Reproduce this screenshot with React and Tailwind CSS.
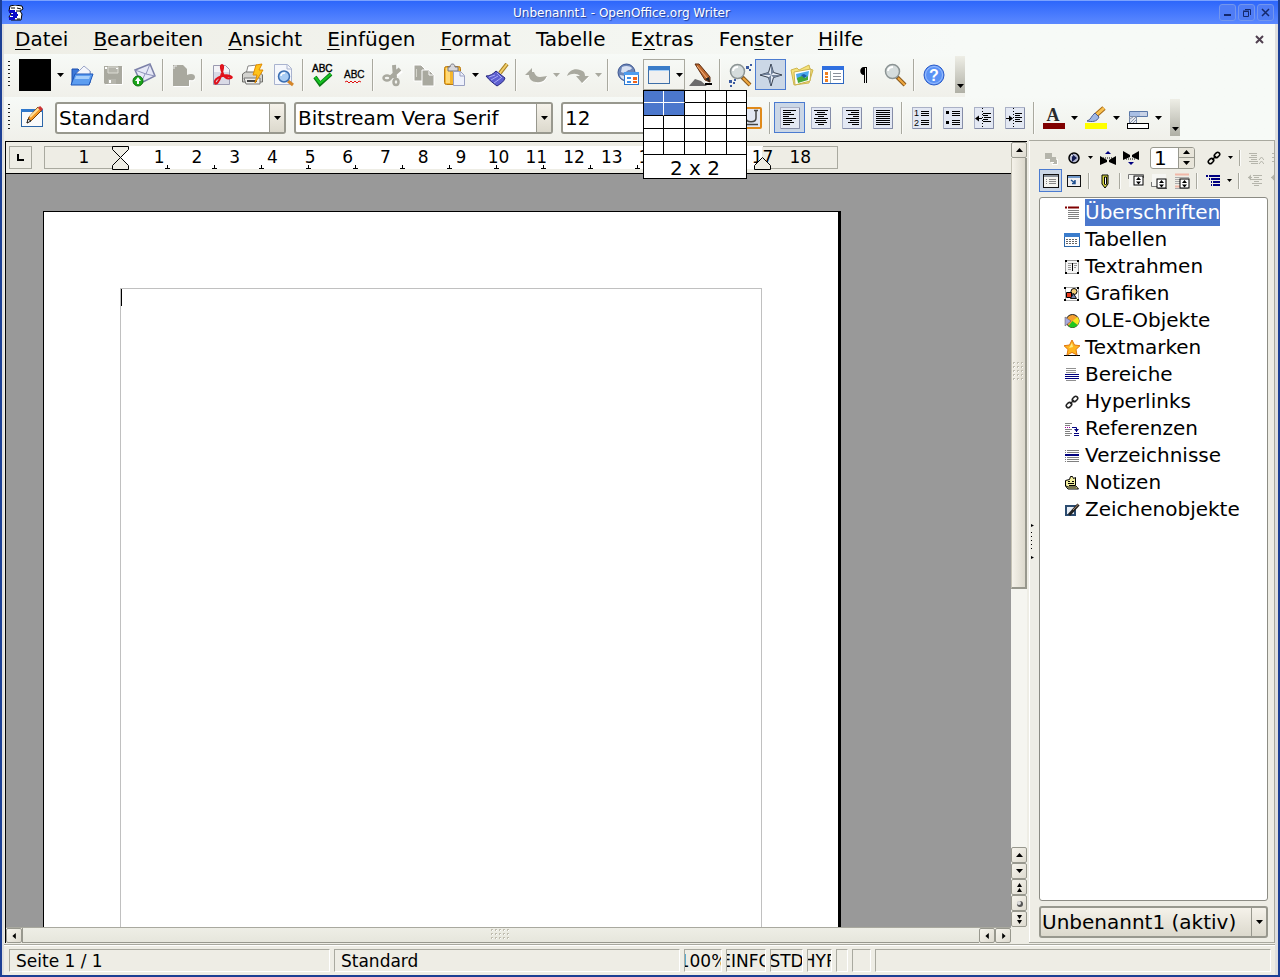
import React, { useState } from 'react';

/* ---------- icons, 24px ---------- */

const Icon = ({ size = 24, children }) => (
  <svg width={size} height={size} viewBox={`0 0 ${size} ${size}`} fill="none" className="shrink-0" aria-hidden="true">
    {children}
  </svg>
);

const OpenIcon = () => (
  <Icon>
    <path d="M2 6h6l2 2h10v12H2z" fill="#3d78d8" stroke="#1c4fae" />
    <path d="M5 12l9-9 6 5v8H5z" fill="#f3f5fb" stroke="#9aa5c8" />
    <path d="M5 11h18l-4 11H1z" fill="#5c9df0" stroke="#1c55b8" />
    <path d="M6 13h14l-1 3H5z" fill="#a5cdfa" />
  </Icon>
);

const SaveIcon = () => (
  <Icon>
    <path d="M3 3h18v18H4l-1-1z" fill="#a9a99f" />
    <path d="M7 4h10v6H7z" fill="#b5b5ac" stroke="#dcdcd4" />
    <path d="M7 16h8v5H7z" fill="#b5b5ac" />
    <path d="M8 17h2v3H8zM15 5h2v1h-2zM4 4h2v2H4z" fill="#fff" />
    <path d="M21.500 4v17.500H5" stroke="#fff" />
  </Icon>
);

const MailIcon = () => (
  <Icon>
    <path d="M3 7l15-6 5 12-14 7z" fill="#e6e8f6" stroke="#7b80a8" strokeWidth="1.500" />
    <path d="M3 7l11 4 4-10M9 20l4-9M23 13l-9-2" stroke="#8f94bb" />
    <circle cx="6" cy="18" r="5" fill="#1aa51a" stroke="#0b720b" />
    <path d="M6 14l3 4H7v3H5v-3H3z" fill="#fff" />
  </Icon>
);

const EditDocIcon = () => (
  <Icon>
    <path d="M2 2h10l4 4v6c4-2 8-1 8 2s-3 4-6 3v6H2z" fill="#a9a99f" />
    <path d="M2.500 23.500h16v-6c4 1 6 0 6-3" stroke="#fff" />
    <path d="M3 6V3h3" stroke="#eee" />
  </Icon>
);

const PdfIcon = () => (
  <Icon>
    <path d="M3.500 2.500h12l4 4v15h-16z" fill="#f3f3f7" stroke="#9a9ab0" />
    <path d="M4 9h15v12H4z" fill="#d9dae6" />
    <path d="M12 2c-2 0-1 5 1 9s5 5 8 4-3-4-9-2-8 5-7 7 4-1 6-7 3-11 1-11z" stroke="#e0101a" strokeWidth="2" />
  </Icon>
);

const PrintIcon = () => (
  <Icon>
    <path d="M7 3l9-1-2 9H5z" fill="#fff" stroke="#888" />
    <path d="M1.500 11l3-2h14l3 3v7h-20z" fill="#d3d3cf" stroke="#6e6e6a" />
    <path d="M3 15h16v6H5z" fill="#efefec" stroke="#777" />
    <path d="M6 18h10" stroke="#444" strokeWidth="2" />
    <path d="M15 2l6-1-3 6h4L14 20l2-8h-4z" fill="#ffc31a" stroke="#e08a00" />
  </Icon>
);

const PreviewIcon = () => (
  <Icon>
    <path d="M2.500 1.500h13l4 4v16h-17z" fill="#f5f7fc" stroke="#a9b3cf" />
    <path d="M15 2v4h4" stroke="#a9b3cf" />
    <path d="M16 18l5 4" stroke="#d5862a" strokeWidth="3" />
    <circle cx="12" cy="13.500" r="5.500" fill="#a9cdf4" stroke="#3a6db0" strokeWidth="1.500" />
    <path d="M9 13c0-2 2-3 4-3" stroke="#fff" strokeWidth="1.500" />
  </Icon>
);

const SpellIcon = () => (
  <Icon>
    <text x="1" y="9" fontSize="10" fontFamily="Liberation Sans, sans-serif" fill="#000" stroke="#000" strokeWidth=".4">ABC</text>
    <path d="M4 14l5 7L20 11" stroke="#0a7a14" strokeWidth="4" />
    <path d="M4 14l5 6L20 11" stroke="#16c422" strokeWidth="2" />
  </Icon>
);

const AutoSpellIcon = () => (
  <Icon>
    <text x="2" y="15" fontSize="10" fontFamily="Liberation Sans, sans-serif" fill="#000" stroke="#000" strokeWidth=".3">ABC</text>
    <path d="M3 19l2-1 2 2 2-2 2 2 2-2 2 2 2-2 2 1" stroke="#e01010" />
  </Icon>
);

const CutIcon = () => (
  <Icon>
    <path d="M14 3l1 13M21 8l-10 8" stroke="#fff" strokeWidth="3" />
    <path d="M13 2l1 13M19 6l-10 9" stroke="#a9a99f" strokeWidth="4" />
    <ellipse cx="6" cy="15" rx="3.500" ry="2.500" stroke="#a9a99f" strokeWidth="2.500" />
    <ellipse cx="15" cy="19" rx="2.500" ry="3" stroke="#a9a99f" strokeWidth="2.500" />
  </Icon>
);

const CopyIcon = () => (
  <Icon>
    <path d="M2 2h7l4 4v12H2z" fill="#a9a99f" stroke="#fff" />
    <path d="M10 7h7l5 5v11H10z" fill="#a9a99f" stroke="#fff" />
    <path d="M17 8v4h4" stroke="#fff" />
    <path d="M4.500 6v8" stroke="#d5d5cc" />
  </Icon>
);

const PasteIcon = () => (
  <Icon>
    <rect x="1.500" y="3.500" width="16" height="18" rx="2" fill="#f5b52c" stroke="#b87a12" />
    <path d="M3 5h4v15H3z" fill="#ffd978" />
    <path d="M5 4h2c0-4 5-4 5 0h3v4H5z" fill="#d7d7dc" stroke="#77777f" />
    <path d="M10.500 8.500h7l4 4v10h-11z" fill="#eef1fb" stroke="#9aa1c2" />
    <path d="M17 9v4h4" stroke="#9aa1c2" />
  </Icon>
);

const BrushIcon = () => (
  <Icon>
    <path d="M22 1l-7 9" stroke="#a88024" strokeWidth="4" />
    <path d="M22 1l-7 9" stroke="#f2cf6a" strokeWidth="2" />
    <path d="M11 8l9 7c-1 4-5 6-8 8C8 20 4 17 1 13c4 0 7-2 10-5z" fill="#5d5fd0" stroke="#26277c" />
    <path d="M4 14l6-2M6 17l7-4M9 20l7-5M12 10l5 5" stroke="#a8aaf5" />
  </Icon>
);

const UndoIcon = () => (
  <Icon>
    <path d="M1 12l7-7v4h2c1 3 3 5 6 5s5-1 7-1c-2 5-6 7-11 6-4 0-7-3-7-7z" fill="#a9a99f" />
    <path d="M23 14c-2 5-6 7-11 6" stroke="#fff" />
  </Icon>
);

const RedoIcon = () => (
  <Icon>
    <path d="M23 13l-7 7-6-7h4c-3-3-8-3-13 0 2-6 8-8 13-6 4 1 5 3 5 6z" fill="#a9a99f" />
    <path d="M23 14l-7 7" stroke="#fff" />
  </Icon>
);

const HyperlinkIcon = () => (
  <Icon>
    <circle cx="10.500" cy="9.500" r="8.500" fill="#6d86b8" stroke="#3c5590" />
    <path d="M6 4c4-2 8-1 10 1-2 3-3 1-5 3s-4 2-6 1zM4 12l5 1v4c-3-1-5-3-5-5z" fill="#d7e0f2" />
    <rect x="8.500" y="9.500" width="14" height="12" fill="#fff" stroke="#2c78d0" />
    <path d="M8 9h15v3H8z" fill="#4f9df0" />
    <path d="M11 14h4v2h-4zM11 18h4v2h-4z" fill="#3f8fe8" />
    <path d="M17 14h4v3h-4zM17 18h4v2h-4z" fill="#f0641a" />
  </Icon>
);

const TableIcon = () => (
  <Icon>
    <rect x="1.500" y="3.500" width="21" height="17" fill="#f0f0f0" stroke="#3c6ea8" />
    <path d="M1 3h22v4H1z" fill="#3a7cc8" />
    <path d="M2 7.500h20" stroke="#a9d0f7" />
  </Icon>
);

const DrawIcon = () => (
  <Icon>
    <path d="M0 23l6-7 6 2 6 5z" fill="#6c6c6c" />
    <path d="M16 21h7" stroke="#000" strokeWidth="2" />
    <path d="M6 1h4l11 13v5l-5-2z" fill="#bf6a30" stroke="#5c2c10" />
    <path d="M8 3l10 12" stroke="#f3b483" />
    <path d="M16 16l4-2 1 5z" fill="#222" />
  </Icon>
);

const Magnifier = () => (
  <>
    <path d="M14 14l8 8" stroke="#8a5a1c" strokeWidth="4" />
    <path d="M15 15l7 7" stroke="#f0a840" strokeWidth="2" />
    <circle cx="9.500" cy="8.500" r="7" fill="#d5dcdc" stroke="#8c9494" strokeWidth="1.500" />
    <path d="M5 8c0-3 3-4 5-4" stroke="#fff" strokeWidth="2" />
  </>
);

const FindIcon = () => (
  <Icon>
    <Magnifier />
    <path d="M18 3h3v3h-3zM22 1h2v2h-2zM21 6h2v2h-2zM1 17h3v3H1zM5 19h2v2H5zM2 22h2v2H2zM6 16h2v2H6z" fill="#3b5aa0" />
  </Icon>
);

const ZoomIcon = () => (
  <Icon>
    <Magnifier />
  </Icon>
);

const NavigatorIcon = () => (
  <Icon>
    <path d="M12 1l2.500 8.500L23 12l-8.500 2.500L12 23l-2.500-8.500L1 12l8.500-2.500z" fill="#e5ecf6" stroke="#333d4c" />
    <path d="M12 1v11l2.500-2.500zM23 12H12l2.500 2.500zM12 23V12l-2.500 2.500zM1 12h11L9.500 9.500z" fill="#72839c" />
  </Icon>
);

const GalleryIcon = () => (
  <Icon>
    <path d="M1 7l6-2 2 2 10-5 1 4 3 1-4 13-15 2z" fill="#f5e27a" stroke="#d0b850" />
    <path d="M4 9l17-3-1 12-15 4z" fill="#fff" stroke="#c9b04c" />
    <path d="M6 11l13-3-1 6-11 3z" fill="#4aa9ee" />
    <path d="M7 15l5-2 3 2 3-2v4L8 20z" fill="#46a838" />
    <path d="M11 12l3-1 3 2-3 2z" fill="#1c5ca8" />
  </Icon>
);

const DataSourceIcon = () => (
  <Icon>
    <rect x="1.500" y="3.500" width="21" height="17" fill="#fff" stroke="#2c66c0" />
    <path d="M1 3h22v4H1z" fill="#2f6fe0" />
    <path d="M4 9h3v3H4zM4 13h3v2H4zM4 16h3v3H4z" fill="#f08020" />
    <path d="M9.500 8v12" stroke="#9aa" />
    <path d="M12 10.500h8M12 13.500h8M12 16.500h8" stroke="#8a8f99" />
  </Icon>
);

const PilcrowIcon = () => (
  <Icon>
    <path d="M15 4h-3c-5 0-5 8 0 8v8h1V5h1v15h1z" fill="#000" />
  </Icon>
);

const HelpIcon = () => (
  <Icon>
    <circle cx="12" cy="12" r="10" fill="#5b92f5" stroke="#2c5cc8" />
    <circle cx="12" cy="12" r="8.500" stroke="#9cc0ff" />
    <text x="12" y="18" textAnchor="middle" fontSize="16" fontWeight="bold" fontFamily="Liberation Sans, sans-serif" fill="#fff">?</text>
  </Icon>
);

const StylesIcon = () => (
  <Icon>
    <rect x="1.500" y="3.500" width="21" height="17" fill="#fafafa" stroke="#2c66a8" />
    <path d="M1 3h22v3H1z" fill="#2f78cc" />
    <path d="M7 17l2-6L18 1l4 3-10 10z" fill="#f39a26" stroke="#7a4208" />
    <path d="M10 11l9-9" stroke="#ffdf9a" strokeWidth="2" />
    <path d="M7 17l1-4 3 2z" fill="#fff" stroke="#222" />
    <path d="M19 1l3 3" stroke="#c33" strokeWidth="3" />
  </Icon>
);

const Sheet = ({ children }) => (
  <Icon>
    <rect x="2.500" y="1.500" width="19" height="21" fill="#e3e8f3" stroke="#aab1c6" />
    <path d="M21.500 2v20.500H3" stroke="#858da8" />
    {children}
  </Icon>
);

const AlignLeftIcon = () => (
  <Sheet>
    <path d="M5 4.500h13M5 6.500h8M5 8.500h11M5 10.500h6M5 12.500h13M5 14.500h9M5 16.500h11M5 18.500h7" stroke="#000" />
  </Sheet>
);

const AlignCenterIcon = () => (
  <Sheet>
    <path d="M5 4.500h14M8 6.500h8M6 8.500h12M9 10.500h6M5 12.500h14M7 14.500h10M6 16.500h12M9 18.500h6" stroke="#000" />
  </Sheet>
);

const AlignRightIcon = () => (
  <Sheet>
    <path d="M6 4.500h13M11 6.500h8M8 8.500h11M13 10.500h6M6 12.500h13M10 14.500h9M8 16.500h11M12 18.500h7" stroke="#000" />
  </Sheet>
);

const JustifyIcon = () => (
  <Sheet>
    <path d="M5 4.500h14M5 6.500h14M5 8.500h14M5 10.500h14M5 12.500h14M5 14.500h14M5 16.500h14M5 18.500h14" stroke="#000" />
  </Sheet>
);

const NumberingIcon = () => (
  <Sheet>
    <path d="M11 5.500h8M11 7.500h8M11 9.500h8M11 14.500h8M11 16.500h8M11 18.500h8" stroke="#000" />
    <text x="4" y="10" fontSize="9" fontFamily="Liberation Sans, sans-serif" fill="#000">1</text>
    <text x="4" y="20" fontSize="9" fontFamily="Liberation Sans, sans-serif" fill="#000">2</text>
  </Sheet>
);

const BulletsIcon = () => (
  <Sheet>
    <path d="M11 5.500h8M11 7.500h8M11 9.500h8M11 14.500h8M11 16.500h8M11 18.500h8" stroke="#000" />
    <path d="M5 5h3v3H5zM5 15h3v3H5z" fill="#000" />
  </Sheet>
);

const OutdentIcon = () => (
  <Sheet>
    <path d="M10.500 2v21" stroke="#000" strokeDasharray="1 2" />
    <path d="M11 7.500h8M11 9.500h5M12 11.500h7M11 13.500h5M11 15.500h8" stroke="#000" />
    <path d="M4 12.500h6" stroke="#000" />
    <path d="M3 12.500l4-3v6z" fill="#000" />
  </Sheet>
);

const IndentIcon = () => (
  <Sheet>
    <path d="M10.500 2v21" stroke="#000" strokeDasharray="1 2" />
    <path d="M12 7.500h7M12 9.500h5M12 11.500h7M12 13.500h5M12 15.500h7" stroke="#000" />
    <path d="M3 12.500h6" stroke="#000" />
    <path d="M10 12.500l-4-3v6z" fill="#000" />
  </Sheet>
);

const FontColorIcon = () => (
  <Icon>
    <text x="11" y="15" textAnchor="middle" fontSize="18" fontWeight="bold" fontFamily="Liberation Serif, serif" fill="#2a2a2a">A</text>
    <path d="M1 17h22v6H1z" fill="#800000" />
  </Icon>
);

const HighlightIcon = () => (
  <Icon>
    <path d="M20 2L11 10" stroke="#a86a14" strokeWidth="5" />
    <path d="M20 2L11 10" stroke="#f8c050" strokeWidth="3" />
    <path d="M11 7l4 4c-2 5-7 5-12 4 4-1 4-5 8-8z" fill="#9fb6e4" stroke="#4a5c94" />
    <path d="M1 17h22v6H1z" fill="#ff0" />
  </Icon>
);

const BackColorIcon = () => (
  <Icon>
    <path d="M3.500 5.500h18v5h-18z" fill="#c9d3e6" stroke="#5a78a8" />
    <path d="M4 6h10v4H4z" fill="#a9bfe4" />
    <path d="M3.500 10.500h7v7h-7z" fill="#e4e7ee" stroke="#7a8ba8" />
    <path d="M4 17l6-6M4 13l3-2M7 17l3-3" stroke="#8a97ad" />
    <rect x="1.500" y="17.500" width="21" height="5" fill="#fff" stroke="#000" />
  </Icon>
);

const BoldIcon = () => (
  <Icon>
    <path d="M8 4h5c5 0 5 7 0 7H8zm0 7h6c5 0 5 8 0 8H8z" stroke="#222" strokeWidth="3" />
  </Icon>
);

const ItalicIcon = () => (
  <Icon>
    <path d="M15 4l-5 15M12 4h6M7 19h6" stroke="#222" strokeWidth="2" />
  </Icon>
);

const UnderlineIcon = () => (
  <Icon>
    <rect x="2" y="2" width="20" height="20" rx="1" fill="#e3e8f3" stroke="#e08a1a" strokeWidth="2" />
    <path d="M7 5v7c0 5 10 5 10 0V5M15 4.500h4M6 18.500h13" stroke="#444" strokeWidth="1.500" />
  </Icon>
);

/* ---------- icons, 16px ---------- */

const LinkShape = ({ color = '#000' }) => (
  <>
    <rect x="9" y="2" width="4" height="6" rx="2" transform="rotate(45 11 5)" stroke={color} strokeWidth="1.500" />
    <rect x="3" y="8" width="4" height="6" rx="2" transform="rotate(45 5 11)" stroke={color} strokeWidth="1.500" />
    <path d="M6 10l4-4" stroke={color} strokeWidth="1.500" />
  </>
);

const ToggleIcon = () => (
  <Icon size={16}>
    <path d="M2 3h7v6H2zM7 7h6v5H7zM10 10h5v4h-5z" fill="#b5b5ab" />
    <path d="M3 9.500h4M8 12.500h3M14.500 9v5.500H9" stroke="#fff" />
  </Icon>
);
const NavigationIcon = () => (
  <Icon size={16}>
    <circle cx="8" cy="8" r="5" fill="#b4b9d0" stroke="#000" strokeWidth="1.500" />
    <path d="M6 4l5 4-5 4z" fill="#101850" />
    <path d="M5 5l2 1" stroke="#fff" />
  </Icon>
);
const PrevIcon = () => (
  <Icon size={16}>
    <path d="M5 4l3-3 3 3z" fill="#000080" />
    <path d="M0 6v9l7-3v-2zM16 6v9l-7-3v-2z" fill="#000" />
    <path d="M3 8h10" stroke="#000" strokeDasharray="1 1" />
  </Icon>
);
const NextIcon = () => (
  <Icon size={16}>
    <path d="M5 12l3 3 3-3z" fill="#000080" />
    <path d="M0 1v9l7-3V5zM16 1v9l-7-3V5z" fill="#000" />
    <path d="M3 9h10" stroke="#000" strokeDasharray="1 1" />
  </Icon>
);
const LinkIcon = () => (
  <Icon size={16}>
    <LinkShape />
  </Icon>
);
const ChapterUpIcon = () => (
  <Icon size={16}>
    <path d="M1 3.500h8M3 5.500h6M1 7.500h8M3 9.500h6M1 11.500h9M3 13.500h7" stroke="#b5b5ab" />
    <path d="M11 10l2.500-3 2.500 3M11 14l2.500-3 2.500 3" stroke="#b5b5ab" />
  </Icon>
);
const ListBoxIcon = () => (
  <Icon size={16}>
    <rect x=".500" y="1.500" width="15" height="13" fill="#f4f4f0" stroke="#111" />
    <path d="M1 3h14" stroke="#8a929c" strokeWidth="2" />
    <path d="M3 6.500h1M6 6.500h7M3 8.500h1M6 8.500h7M3 10.500h1M6 10.500h7" stroke="#888" />
  </Icon>
);
const ContentViewIcon = () => (
  <Icon size={16}>
    <rect x="1.500" y="2.500" width="13" height="11" fill="#f0f0f2" stroke="#111" />
    <path d="M2 4h12" stroke="#6f97c8" strokeWidth="2" />
    <path d="M5 7l4 3M9 7v3.500H6" stroke="#205090" strokeWidth="1.500" />
  </Icon>
);
const ReminderIcon = () => (
  <Icon size={16}>
    <path d="M5 2h6v9l-3 4-3-4z" fill="#d8d840" stroke="#000" />
    <path d="M7.500 4h2v7l-1 1-1-1z" fill="#fff" stroke="#000" />
  </Icon>
);
const HeaderIcon = () => (
  <Icon size={16}>
    <path d="M1 2h14v12H1z" fill="#f6f6f3" />
    <path d="M.500 6V1.500h15V5" stroke="#777" />
    <rect x="6" y="3" width="9" height="9" fill="#fff" stroke="#000" />
    <path d="M8 7l2.500-3L13 7zM8 8.500l2.500 3 2.500-3z" fill="#000" />
  </Icon>
);
const FooterIcon = () => (
  <Icon size={16}>
    <path d="M1 1h14v12H1z" fill="#f6f6f3" />
    <path d="M.500 9v4.500h6M7 15.500h9" stroke="#777" />
    <rect x="6" y="6" width="9" height="9" fill="#fff" stroke="#000" />
    <path d="M8 10l2.500-3 2.500 3zM8 11.500l2.500 3 2.500-3z" fill="#000" />
  </Icon>
);
const AnchorIcon = () => (
  <Icon size={16}>
    <path d="M1 1.500h14M1 13.500h5" stroke="#f0b8a8" strokeWidth="2" />
    <path d="M1 4.500h14M1 6.500h5M1 8.500h5M1 10.500h5M1 15.500h13" stroke="#aaa" />
    <rect x="6" y="6" width="9" height="9" fill="#fff" stroke="#000" />
    <path d="M8 10l2.500-3 2.500 3zM8 11.500l2.500 3 2.500-3z" fill="#000" />
  </Icon>
);
const LevelsIcon = () => (
  <Icon size={16}>
    <path d="M1 3h2M4 3h11M4 6h1M6 6h9M6 9h1M8 9h7M6 12h1M8 12h7" stroke="#000080" strokeWidth="2" />
  </Icon>
);
const PromoteIcon = () => (
  <Icon size={16}>
    <path d="M6 2.500h9M1 4.500h4M7 4.500h5M3 6.500h12M7 8.500h5M5 10.500h10M7 12.500h5" stroke="#b5b5ab" />
    <path d="M1 4.500l3-3v6z" fill="#b5b5ab" />
  </Icon>
);

const HeadingsIcon = () => (
  <Icon size={16}>
    <path d="M1 2.500h2M4 2.500h11" stroke="#800000" strokeWidth="2" />
    <path d="M4 5.500h11M4 7.500h11M4 9.500h11M4 11.500h11M4 13.500h11" stroke="#808080" />
  </Icon>
);
const TablesIcon = () => (
  <Icon size={16}>
    <rect x=".500" y="2.500" width="15" height="12" fill="#fff" stroke="#2c66a8" />
    <path d="M0 1h16v4H0z" fill="#3a7ccc" />
    <path d="M2 7.500h12M2 9.500h12M2 11.500h12" stroke="#666" strokeDasharray="2 1" />
  </Icon>
);
const FramesIcon = () => (
  <Icon size={16}>
    <rect x="1.500" y="1.500" width="13" height="13" fill="#f4f4f4" stroke="#999" />
    <path d="M1 1h2v2H1zM13 1h2v2h-2zM1 13h2v2H1zM13 13h2v2h-2z" fill="#000" />
    <path d="M4 4.500h9M4 6.500h3M10 6.500h3M4 8.500h3M10 8.500h2M4 10.500h3" stroke="#999" />
    <path d="M8.500 4v8" stroke="#000" />
  </Icon>
);
const GraphicsIcon = () => (
  <Icon size={16}>
    <rect x="1.500" y="1.500" width="13" height="13" stroke="#555" strokeDasharray="1 1" />
    <path d="M0 1h2v2H0zM13 1h2v2h-2zM0 13h2v2H0zM13 13h2v2h-2z" fill="#000" />
    <circle cx="10" cy="5.500" r="3" fill="#f5cf7a" stroke="#000" />
    <path d="M2.500 6.500h5v5h-5z" fill="#e8381c" stroke="#000" />
    <path d="M6.500 12.500l3-5 3 5z" fill="#7486b0" stroke="#111" />
  </Icon>
);
const OleIcon = () => (
  <Icon size={16}>
    <circle cx="8.500" cy="8" r="6.500" fill="#f5a030" stroke="#222" />
    <path d="M8.500 8l5-4a6 6 0 0 1 0 8z" fill="#f5e820" />
    <path d="M8.500 8l5 4a6 6 0 0 1-9 1z" fill="#20c820" />
    <path d="M1 4l6 4-6 5z" fill="#a8a8dc" stroke="#555" strokeWidth=".5" />
  </Icon>
);
const BookmarkIcon = () => (
  <Icon size={16}>
    <path d="M0 15.500h16" stroke="#000" />
    <path d="M8 0l2.500 5 5.500.700-4 3.800 1 5.500-5-2.600L3 15l1-5.500L0 5.700 5.500 5z" fill="#ffb41e" stroke="#e07810" />
    <path d="M8 3l1 4-4 1z" fill="#ffec80" />
  </Icon>
);
const SectionsIcon = () => (
  <Icon size={16}>
    <path d="M2 1.500h10M2 3.500h10M2 5.500h10M2 13.500h10" stroke="#909090" />
    <path d="M1 7.500h14M1 9.500h14M1 11.500h14" stroke="#000080" />
  </Icon>
);
const HyperlinksIcon = () => (
  <Icon size={16}>
    <LinkShape color="#222" />
  </Icon>
);
const ReferencesIcon = () => (
  <Icon size={16}>
    <path d="M1 2.500h7M1 4.500h5M1 8.500h7M1 10.500h5M1 12.500h7M1 14.500h5" stroke="#808080" />
    <path d="M1 6.500h6" stroke="#a000a0" strokeDasharray="1 1" />
    <path d="M8 6.500h4.500V11M10 14.500h5M10 12.500h5" stroke="#000080" />
    <path d="M10 8h5l-2.500 3z" fill="#000080" />
  </Icon>
);
const IndexesIcon = () => (
  <Icon size={16}>
    <path d="M1 2.500h1M3 2.500h12M1 4.500h1M3 4.500h12M1 9.500h1M3 9.500h12M1 11.500h1M3 11.500h12M1 13.500h1M3 13.500h12" stroke="#808080" />
    <path d="M1 7h14" stroke="#000080" strokeWidth="2" />
  </Icon>
);
const NotesIcon = () => (
  <Icon size={16}>
    <path d="M1.500 5.500l4-1 1-3h2l1 2 2-1v8l3 3.500H4l-2.500-3z" fill="#f4f0a0" stroke="#000" />
    <path d="M4 6.500h2M8 6.500h2M4 8.500h6M5 10.500h6M2 11l2 1h8" stroke="#000" />
  </Icon>
);
const DrawObjectsIcon = () => (
  <Icon size={16}>
    <path d="M2 4h9v9H2z" fill="#e8eef6" stroke="#2c4c70" strokeWidth="2" />
    <path d="M14.500 2.500L5 13" stroke="#222" strokeWidth="3" />
    <path d="M14.500 2L9 8" stroke="#b08c70" />
  </Icon>
);

/* ---------- shared controls ---------- */

const Arrow = ({ dir = 'down', faded = false }) => {
  const paths = {
    down: 'M0 1h7L3.500 5z',
    up: 'M0 5h7L3.500 1z',
    left: 'M5 0v7L1 3.500z',
    right: 'M2 0v7l4-3.500z',
  };
  const box = dir === 'down' || dir === 'up' ? '0 0 7 6' : '0 0 7 7';
  return (
    <svg width="7" height="6" viewBox={box} className="shrink-0" aria-hidden="true">
      <path d={paths[dir]} fill={faded ? '#a9a99f' : '#000'} />
    </svg>
  );
};

const ToolButton = ({ label, icon, active = false }) => (
  <button
    type="button"
    aria-label={label}
    className={`flex h-[31px] w-[31px] shrink-0 items-center justify-center ${
      active ? 'border border-[#4b7bd0] bg-[#cbd7e6]' : ''
    }`}
  >
    {icon}
  </button>
);

const DropArrow = ({ label, faded }) => (
  <button type="button" aria-label={label} className="flex h-[31px] w-[11px] shrink-0 items-center justify-center">
    <Arrow faded={faded} />
  </button>
);

const Separator = () => <div className="mx-[3px] box-content h-8 w-px shrink-0 border-r border-[#fbfbf8] bg-[#a9a99f]" />;

const Grip = () => (
  <div className="h-7 w-[2px] shrink-0 bg-[repeating-linear-gradient(to_bottom,#222_0_1px,transparent_1px_4px)]" />
);

const OverflowHandle = ({ label }) => (
  <button
    type="button"
    aria-label={label}
    className="ml-[6px] flex h-[37px] w-[10px] shrink-0 items-end justify-center bg-linear-to-b from-[#eeeee6] to-[#b0b0a6] pb-1"
  >
    <Arrow />
  </button>
);

const ComboBox = ({ label, value, className }) => (
  <div className={`relative h-8 shrink-0 overflow-hidden rounded-[3px] border-2 border-[#98988e] bg-white ${className}`}>
    <select
      aria-label={label}
      defaultValue={value}
      className="h-full w-full appearance-none bg-transparent pl-[2px] pr-5 text-xl leading-7 outline-none"
    >
      <option>{value}</option>
    </select>
    <span className="pointer-events-none absolute inset-y-0 right-0 flex w-[15px] items-center justify-center border-l border-[#98988e] bg-linear-to-b from-[#f5f2ea] to-[#dcd9cd]">
      <Arrow />
    </span>
  </div>
);

/* ---------- window parts ---------- */

const TitleBar = () => (
  <header className="flex h-6 shrink-0 items-center border-t border-[#7ba2ff] bg-linear-to-b from-[#2d66fb] to-[#5b88ff] pl-[6px] pr-1">
    <Icon size={16}>
      <path d="M2 1l5-1 7 1 1 3-3 2 2 3-1 6H3l-2-3 2-3-2-3z" fill="#fff" stroke="#000" />
      <path d="M1 5h6v3H1zM3 9h7v2H3zM1 12h6v3H1zM5 7h4v6H5z" fill="#0a0ac8" />
      <path d="M3 3h4M9 3l4 1M8 6h4M9 14h3" stroke="#000" />
    </Icon>
    <h1 className="flex-1 text-center text-xs text-white [text-shadow:1px_1px_1px_#1c3c9c]">
      Unbenannt1 - OpenOffice.org Writer
    </h1>
    <div className="flex gap-[2px]">
      <button type="button" aria-label="Minimieren" className="flex h-[17px] w-[17px] items-center justify-center rounded-[3px] border border-[#7396ee] bg-[#4f7cf5]">
        <svg width="9" height="9" viewBox="0 0 9 9"><path d="M1 7h7" stroke="#14286c" strokeWidth="2" /></svg>
      </button>
      <button type="button" aria-label="Wiederherstellen" className="flex h-[17px] w-[17px] items-center justify-center rounded-[3px] border border-[#7396ee] bg-[#4f7cf5]">
        <svg width="9" height="9" viewBox="0 0 9 9" fill="none" stroke="#14286c"><path d="M1.500 3.500h5v5h-5zM3 1.500h5.500V7" /><path d="M1 3h6" /></svg>
      </button>
      <button type="button" aria-label="Schließen" className="flex h-[17px] w-[17px] items-center justify-center rounded-[3px] border border-[#7396ee] bg-[#4f7cf5]">
        <svg width="9" height="9" viewBox="0 0 9 9"><path d="M1 1l7 7M8 1L1 8" stroke="#14286c" strokeWidth="1.500" /></svg>
      </button>
    </div>
  </header>
);

// [before, accelerator, after]
const menus = [
  ['', 'D', 'atei'],
  ['', 'B', 'earbeiten'],
  ['', 'A', 'nsicht'],
  ['', 'E', 'infügen'],
  ['', 'F', 'ormat'],
  ['Tabelle', '', ''],
  ['E', 'x', 'tras'],
  ['Fen', 's', 'ter'],
  ['', 'H', 'ilfe'],
];

const MenuBar = () => (
  <nav className="flex h-[30px] shrink-0 items-center gap-[25px] bg-linear-to-r from-[#eeeee6] to-[#f7faf7] to-75% pl-[11px] pr-[11px] text-xl leading-[30px]">
    {menus.map(([pre, key, post]) => (
      <button key={pre + key + post} type="button" className="leading-6">
        {pre}
        <span className="underline decoration-1 underline-offset-[3px]">{key}</span>
        {post}
      </button>
    ))}
    <button type="button" aria-label="Dokument schließen" className="ml-auto">
      <svg width="9" height="9" viewBox="0 0 9 9"><path d="M1 1l7 7M8 1L1 8" stroke="#504050" strokeWidth="2" /></svg>
    </button>
  </nav>
);

const TableSizePicker = ({ rows, cols, onPick }) => (
  <div className="absolute -left-px top-[30px] z-10 w-[104px] border border-black bg-white">
    <div className="grid grid-cols-[20px_21px_21px_21px_19px]">
      {Array.from({ length: 25 }, (_, i) => {
        const r = Math.floor(i / 5) + 1;
        const c = (i % 5) + 1;
        const picked = r <= rows && c <= cols;
        return (
          <button
            key={i}
            type="button"
            aria-label={`${c} Spalten, ${r} Zeilen`}
            onMouseEnter={() => onPick(r, c)}
            className={`${r === 1 ? 'h-3' : 'h-[13px]'} border-b ${c < 5 ? 'border-r' : ''} ${
              picked ? 'bg-[#4b77cc]' : 'bg-white'
            } ${picked && c < cols ? 'border-r-white' : 'border-r-black'} ${
              picked && r < rows ? 'border-b-white' : 'border-b-black'
            }`}
          />
        );
      })}
    </div>
    <div className="h-[23px] text-center text-xl leading-[26px]">{rows} x {cols}</div>
  </div>
);

const StandardToolbar = () => {
  const [size, setSize] = useState([2, 2]);

  return (
    <div className="flex h-[43px] w-fit shrink-0 items-center bg-linear-to-b from-[#f7faf7] to-[#f0f0ea] pb-[2px] pl-1">
      <Grip />
      <button type="button" aria-label="Neu" className="ml-[9px] mr-1 h-8 w-8 shrink-0 bg-black" />
      <DropArrow label="Neu Auswahl" />
      <ToolButton label="Öffnen" icon={<OpenIcon />} />
      <ToolButton label="Speichern" icon={<SaveIcon />} />
      <ToolButton label="Dokument als E-Mail" icon={<MailIcon />} />
      <Separator />
      <ToolButton label="Datei bearbeiten" icon={<EditDocIcon />} />
      <Separator />
      <ToolButton label="Direktes Exportieren als PDF" icon={<PdfIcon />} />
      <ToolButton label="Datei direkt drucken" icon={<PrintIcon />} />
      <ToolButton label="Seitenansicht" icon={<PreviewIcon />} />
      <Separator />
      <ToolButton label="Rechtschreibprüfung" icon={<SpellIcon />} />
      <ToolButton label="Automatische Rechtschreibprüfung" icon={<AutoSpellIcon />} />
      <Separator />
      <ToolButton label="Ausschneiden" icon={<CutIcon />} />
      <ToolButton label="Kopieren" icon={<CopyIcon />} />
      <ToolButton label="Einfügen" icon={<PasteIcon />} />
      <DropArrow label="Einfügen Auswahl" />
      <ToolButton label="Format übertragen" icon={<BrushIcon />} />
      <Separator />
      <ToolButton label="Rückgängig" icon={<UndoIcon />} />
      <DropArrow label="Rückgängig Auswahl" faded />
      <ToolButton label="Wiederherstellen" icon={<RedoIcon />} />
      <DropArrow label="Wiederherstellen Auswahl" faded />
      <Separator />
      <ToolButton label="Hyperlink" icon={<HyperlinkIcon />} />
      <div className="relative flex h-[31px] w-[42px] shrink-0 items-center justify-center border border-[#a9a99f]">
        <ToolButton label="Tabelle" icon={<TableIcon />} />
        <DropArrow label="Tabellengröße" />
        <TableSizePicker rows={size[0]} cols={size[1]} onPick={(r, c) => setSize([r, c])} />
      </div>
      <ToolButton label="Zeichenfunktionen" icon={<DrawIcon />} />
      <Separator />
      <ToolButton label="Suchen und Ersetzen" icon={<FindIcon />} />
      <ToolButton label="Navigator" icon={<NavigatorIcon />} active />
      <ToolButton label="Gallery" icon={<GalleryIcon />} />
      <ToolButton label="Datenquellen" icon={<DataSourceIcon />} />
      <ToolButton label="Steuerzeichen" icon={<PilcrowIcon />} />
      <ToolButton label="Maßstab" icon={<ZoomIcon />} />
      <Separator />
      <ToolButton label="Hilfe" icon={<HelpIcon />} />
      <OverflowHandle label="Weitere Schaltflächen" />
    </div>
  );
};

const FormatToolbar = () => (
  <div className="flex h-[43px] w-fit shrink-0 items-center bg-linear-to-b from-[#f7faf7] to-[#f0f0ea] pb-[2px] pl-1">
    <Grip />
    <div className="ml-[6px] mr-2 flex"><ToolButton label="Formatvorlagen" icon={<StylesIcon />} /></div>
    <ComboBox label="Formatvorlage" value="Standard" className="w-[231px]" />
    <ComboBox label="Schriftart" value="Bitstream Vera Serif" className="ml-2 w-[259px]" />
    <ComboBox label="Schriftgröße" value="12" className="ml-2 mr-[2px] w-[102px]" />
    <Separator />
    <ToolButton label="Fett" icon={<BoldIcon />} />
    <ToolButton label="Kursiv" icon={<ItalicIcon />} />
    <ToolButton label="Unterstrichen" icon={<UnderlineIcon />} />
    <Separator />
    <ToolButton label="Linksbündig" icon={<AlignLeftIcon />} active />
    <ToolButton label="Zentriert" icon={<AlignCenterIcon />} />
    <ToolButton label="Rechtsbündig" icon={<AlignRightIcon />} />
    <ToolButton label="Blocksatz" icon={<JustifyIcon />} />
    <Separator />
    <ToolButton label="Nummerierung" icon={<NumberingIcon />} />
    <ToolButton label="Aufzählung" icon={<BulletsIcon />} />
    <ToolButton label="Einzug vermindern" icon={<OutdentIcon />} />
    <ToolButton label="Einzug erhöhen" icon={<IndentIcon />} />
    <Separator />
    <ToolButton label="Schriftfarbe" icon={<FontColorIcon />} />
    <DropArrow label="Schriftfarbe Auswahl" />
    <ToolButton label="Zeichenhintergrund" icon={<HighlightIcon />} />
    <DropArrow label="Zeichenhintergrund Auswahl" />
    <ToolButton label="Absatzhintergrund" icon={<BackColorIcon />} />
    <DropArrow label="Absatzhintergrund Auswahl" />
    <OverflowHandle label="Weitere Formate" />
  </div>
);

const rulerNumbers = [1, '', 1, 2, 3, 4, 5, 6, 7, 8, 9, 10, 11, 12, 13, 14, 15, 16, 17, 18];
const tabStops = Array.from({ length: 13 }, (_, i) => (i + 1) * 47);

const Ruler = () => (
  <div className="flex h-8 shrink-0 items-center border-b border-black bg-[#eeede5] pl-[3px]">
    <button type="button" aria-label="Tabulator" className="flex h-[23px] w-[23px] shrink-0 items-center justify-center border border-[#a9a99f]">
      <svg width="7" height="7" viewBox="0 0 7 7" fill="none"><path d="M1 0v6h6" stroke="#000" strokeWidth="2" /></svg>
    </button>
    <div className="relative ml-3 h-[23px] w-[794px] shrink-0 border border-[#a9a99f] bg-[linear-gradient(to_right,transparent_76px,#fff_76px,#fff_717px,transparent_717px)]">
      <div className="flex pl-5 pr-[18px] text-[17px] leading-5">
        {rulerNumbers.map((n, i) => (
          <span key={i} className="flex-1 text-center">{n}</span>
        ))}
      </div>
      <svg className="absolute -top-px left-0 overflow-visible" width="792" height="24" fill="none" stroke="#000" aria-hidden="true">
        <path d="M76 .500h642M76 22.500h642" stroke="#fff" />
        {tabStops.map((x) => (
          <path key={x} d={`M${x + 73} 22.500h5M${x + 75.5} 19v4`} />
        ))}
        <path d="M67.500.500h16v3l-8 8-8-8zM67.500 23.500h16v-4l-8-8-8 8z" fill="#eeede5" />
        <path d="M709.500 23.500h16v-4l-8-8-8 8z" fill="#eeede5" />
      </svg>
    </div>
  </div>
);

const ScrollButton = ({ label, children, className = '' }) => (
  <button
    type="button"
    aria-label={label}
    className={`flex shrink-0 items-center justify-center rounded-[2px] border border-[#98988e] bg-linear-to-br from-[#f7f5ee] to-[#dedbd0] ${className}`}
  >
    {children}
  </button>
);

const GripDots = ({ cols, rows }) => (
  <svg width={cols * 4} height={rows * 4} className="shrink-0" aria-hidden="true">
    {Array.from({ length: cols * rows }, (_, i) => {
      const x = (i % cols) * 4;
      const y = Math.floor(i / cols) * 4;
      return (
        <g key={i}>
          <path d={`M${x + 1} ${y + 1}h1v1h-1z`} fill="#fff" />
          <path d={`M${x} ${y}h2v1h-1v1h-1z`} fill="#c0bdb0" />
        </g>
      );
    })}
  </svg>
);

const VerticalScrollbar = () => (
  <div className="flex w-4 shrink-0 flex-col bg-[#f5f5f0]">
    <ScrollButton label="Nach oben" className="h-4 w-4"><Arrow dir="up" /></ScrollButton>
    <div className="flex min-h-0 flex-1 flex-col">
      <div className="flex h-5/8 items-center justify-center border-r-2 border-b-2 border-l border-[#98988e] border-l-[#c5c2b5] bg-linear-to-r from-[#f5f2ea] to-[#dcd9cd]">
        <GripDots cols={3} rows={5} />
      </div>
    </div>
    <div className="flex flex-col">
      <ScrollButton label="Zeile nach oben" className="h-4 w-4"><Arrow dir="up" /></ScrollButton>
      <ScrollButton label="Zeile nach unten" className="h-4 w-4"><Arrow /></ScrollButton>
      <ScrollButton label="Vorherige Seite" className="h-4 w-4">
        <svg width="7" height="9" viewBox="0 0 7 9"><path d="M1 4h5L3.500 0zM1 9h5L3.500 5z" /></svg>
      </ScrollButton>
      <ScrollButton label="Navigation" className="h-4 w-4">
        <svg width="8" height="8" viewBox="0 0 8 8"><circle cx="5" cy="5" r="3" fill="#555" /><circle cx="4" cy="4" r="2" fill="#ddd" /></svg>
      </ScrollButton>
      <ScrollButton label="Nächste Seite" className="h-4 w-4">
        <svg width="7" height="9" viewBox="0 0 7 9"><path d="M1 0h5L3.500 4zM1 5h5L3.500 9z" /></svg>
      </ScrollButton>
    </div>
  </div>
);

const HorizontalScrollbar = () => (
  <div className="mr-4 flex h-4 shrink-0 border-t border-[#a9a99f]">
    <ScrollButton label="Nach links" className="w-4"><Arrow dir="left" /></ScrollButton>
    <div className="flex flex-1 items-center justify-center border-b border-l border-[#98988e] bg-linear-to-b from-[#eeeee6] to-[#e6e6dc]">
      <GripDots cols={5} rows={3} />
    </div>
    <ScrollButton label="Zurück" className="w-4"><Arrow dir="left" /></ScrollButton>
    <ScrollButton label="Nach rechts" className="w-4"><Arrow dir="right" /></ScrollButton>
  </div>
);

const DocumentArea = () => (
  <main className="mt-px flex min-w-0 flex-1 flex-col border-t border-l border-black">
    <div className="flex min-h-0 flex-1">
      <div className="flex min-w-0 flex-1 flex-col overflow-hidden">
        <Ruler />
        <div className="flex min-h-0 flex-1 bg-[#999] pl-[37px] pt-[37px]">
          <div className="flex w-[798px] shrink-0 border-t border-r-[3px] border-l border-black bg-white pl-[76px] pr-[76px] pt-[76px]">
            <div
              role="textbox"
              aria-label="Dokumenttext"
              className="flex-1 border-t border-r border-l border-[#c0c0c0]"
            >
              <div className="h-[17px] w-px bg-black" />
            </div>
          </div>
        </div>
      </div>
      <VerticalScrollbar />
    </div>
    <HorizontalScrollbar />
  </main>
);

const MiniButton = ({ label, icon, active = false }) => (
  <button
    type="button"
    aria-label={label}
    className={`flex h-[23px] w-[23px] shrink-0 items-center justify-center ${
      active ? 'border border-[#4b7bd0] bg-[#cbd7e6]' : ''
    }`}
  >
    {icon}
  </button>
);

const MiniArrow = ({ label }) => (
  <button type="button" aria-label={label} className="flex h-[23px] w-[11px] shrink-0 items-center justify-center">
    <svg width="5" height="3" viewBox="0 0 5 3"><path d="M0 0h5L2.500 3z" /></svg>
  </button>
);

const MiniSeparator = () => <div className="mx-[3px] h-4 w-[2px] shrink-0 border-r border-[#fbfbf8] bg-[#a9a99f]" />;

const entries = [
  { name: 'Überschriften', icon: <HeadingsIcon /> },
  { name: 'Tabellen', icon: <TablesIcon /> },
  { name: 'Textrahmen', icon: <FramesIcon /> },
  { name: 'Grafiken', icon: <GraphicsIcon /> },
  { name: 'OLE-Objekte', icon: <OleIcon /> },
  { name: 'Textmarken', icon: <BookmarkIcon /> },
  { name: 'Bereiche', icon: <SectionsIcon /> },
  { name: 'Hyperlinks', icon: <HyperlinksIcon /> },
  { name: 'Referenzen', icon: <ReferencesIcon /> },
  { name: 'Verzeichnisse', icon: <IndexesIcon /> },
  { name: 'Notizen', icon: <NotesIcon /> },
  { name: 'Zeichenobjekte', icon: <DrawObjectsIcon /> },
];

const Navigator = () => {
  const [selected, setSelected] = useState('Überschriften');

  return (
    <aside className="flex w-[246px] shrink-0 border-t border-r border-b border-[#a9a99f]">
      <div className="flex w-[10px] shrink-0 items-center border-l border-white">
        <svg width="6" height="36" viewBox="0 0 6 36" aria-hidden="true">
          <path d="M1 0l3 1.500L1 3zM1 32l3 1.500L1 35z" />
          <path d="M1 8h1v1H1zM1 12h1v1H1zM1 16h1v1H1zM1 20h1v1H1zM1 24h1v1H1z" />
        </svg>
      </div>
      <div className="flex min-w-0 flex-1 flex-col pb-1">
        <div className="overflow-hidden pt-[5px]">
          <div className="flex items-center">
            <MiniButton label="Umschalten" icon={<ToggleIcon />} />
            <MiniButton label="Navigation" icon={<NavigationIcon />} />
            <MiniArrow label="Navigation Auswahl" />
            <MiniButton label="Zurück" icon={<PrevIcon />} />
            <MiniButton label="Vor" icon={<NextIcon />} />
            <div className="ml-2 mr-[7px] flex h-[22px] w-[45px] shrink-0 overflow-hidden rounded-[3px] border border-[#98988e] bg-white">
              <input aria-label="Seite" defaultValue="1" className="h-5 w-[27px] pl-[3px] text-xl leading-5 outline-none" />
              <div className="flex flex-1 flex-col border-l border-[#98988e] bg-[#e8e5da]">
                <button type="button" aria-label="Seite vor" className="flex flex-1 items-center justify-center border-b border-[#98988e]"><Arrow dir="up" /></button>
                <button type="button" aria-label="Seite zurück" className="flex flex-1 items-center justify-center"><Arrow /></button>
              </div>
            </div>
            <MiniButton label="Dragmodus" icon={<LinkIcon />} />
            <MiniArrow label="Dragmodus Auswahl" />
            <MiniSeparator />
            <MiniButton label="Kapitel hoch" icon={<ChapterUpIcon />} />
            <MiniButton label="Kapitel runter" icon={<ChapterUpIcon />} />
          </div>
          <div className="flex items-center">
            <MiniButton label="Listenfenster" icon={<ListBoxIcon />} active />
            <MiniButton label="Inhaltsansicht" icon={<ContentViewIcon />} />
            <MiniSeparator />
            <MiniButton label="Merker setzen" icon={<ReminderIcon />} />
            <MiniSeparator />
            <MiniButton label="Kopfzeile" icon={<HeaderIcon />} />
            <MiniButton label="Fußzeile" icon={<FooterIcon />} />
            <MiniButton label="Anker und Text" icon={<AnchorIcon />} />
            <MiniSeparator />
            <MiniButton label="Überschriftenebenen" icon={<LevelsIcon />} />
            <MiniArrow label="Ebenen Auswahl" />
            <MiniSeparator />
            <MiniButton label="Ebene höher" icon={<PromoteIcon />} />
            <MiniButton label="Ebene tiefer" icon={<PromoteIcon />} />
          </div>
        </div>
        <ul className="mr-[6px] mt-[5px] flex-1 rounded-[3px] border border-[#8c8c84] bg-white pt-px">
          {entries.map((e) => (
            <li key={e.name}>
              <button
                type="button"
                onClick={() => setSelected(e.name)}
                className="flex h-[27px] items-center gap-[5px] pl-6 text-xl leading-[27px]"
              >
                {e.icon}
                <span className={selected === e.name ? 'bg-[#4b77cc] text-white' : ''}>{e.name}</span>
              </button>
            </li>
          ))}
        </ul>
        <div className="relative mr-[6px] mt-[5px] h-8 overflow-hidden rounded-[3px] border-2 border-[#98988e] bg-linear-to-b from-[#f5f2ea] to-[#dcd9cd]">
          <select
            aria-label="Dokument"
            defaultValue="Unbenannt1 (aktiv)"
            className="h-full w-full appearance-none bg-transparent pl-px text-xl leading-7 outline-none"
          >
            <option>Unbenannt1 (aktiv)</option>
          </select>
          <span className="pointer-events-none absolute inset-y-0 right-0 flex w-[15px] items-center justify-center border-l border-[#98988e]">
            <Arrow />
          </span>
        </div>
      </div>
    </aside>
  );
};

const StatusCell = ({ className = '', children }) => (
  <div className={`flex h-[23px] shrink-0 overflow-hidden border border-[#a9a99f] border-r-white border-b-white whitespace-nowrap ${className}`}>
    {children}
  </div>
);

const StatusBar = () => (
  <footer className="flex h-[30px] shrink-0 items-center gap-1 border-t border-white pl-[5px] pr-1 text-[17px] leading-[22px]">
    <StatusCell className="w-[321px] pl-[6px]">Seite 1 / 1</StatusCell>
    <StatusCell className="w-[346px] pl-[6px]">Standard</StatusCell>
    <StatusCell className="w-[38px] justify-center">100%</StatusCell>
    <StatusCell className="w-10 justify-center">EINFG</StatusCell>
    <StatusCell className="w-[33px] justify-center">STD</StatusCell>
    <StatusCell className="w-[25px] justify-center">HYP</StatusCell>
    <StatusCell className="w-3" />
    <StatusCell className="w-[19px]" />
    <StatusCell className="min-w-0 flex-1 shrink" />
  </footer>
);

const App = () => (
  <div className="flex h-screen flex-col overflow-hidden border-r-2 border-b-2 border-l-2 border-[#1c3f94] bg-[#eeede5] font-['DejaVu_Sans',Verdana,sans-serif] text-black">
    <TitleBar />
    <div className="flex min-h-0 flex-1 flex-col border-r-[3px] border-l-2 border-[#dedede]">
      <MenuBar />
      <div className="flex flex-col bg-linear-to-r from-[#eeeee6] to-[#f7faf7] to-75%">
        <StandardToolbar />
        <FormatToolbar />
      </div>
      <div className="flex min-h-0 flex-1 gap-[2px] border-b border-[#a9a99f] pb-px pl-px">
        <DocumentArea />
        <Navigator />
      </div>
      <StatusBar />
    </div>
  </div>
);

export default App;
